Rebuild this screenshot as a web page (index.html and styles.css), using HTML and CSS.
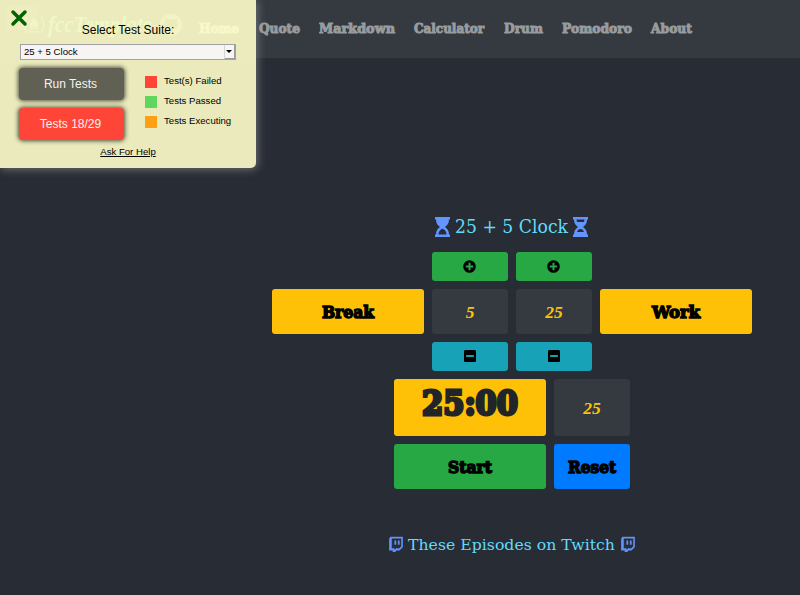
FILE: index.html
```html
<!DOCTYPE html>
<html lang="en">
<head>
<meta charset="utf-8">
<title>25 + 5 Clock</title>
<link rel="stylesheet" href="styles.css">
</head>
<body>
<svg class="defs" width="0" height="0">
  <symbol id="plus" viewBox="0 0 512 512"><path d="M256 8a248 248 0 1 0 0 496 248 248 0 0 0 0-496zm144 276c0 7-5 12-12 12h-92v92c0 7-5 12-12 12h-56c-7 0-12-5-12-12v-92h-92c-7 0-12-5-12-12v-56c0-7 5-12 12-12h92v-92c0-7 5-12 12-12h56c7 0 12 5 12 12v92h92c7 0 12 5 12 12z"/></symbol>
  <symbol id="minus" viewBox="0 0 448 512"><path d="M400 32H48C21.500 32 0 53.500 0 80v352c0 26.500 21.500 48 48 48h352c26.500 0 48-21.500 48-48V80c0-26.500-21.500-48-48-48zM92 296c-7 0-12-5-12-12v-56c0-7 5-12 12-12h264c7 0 12 5 12 12v56c0 7-5 12-12 12H92z"/></symbol>
  <symbol id="twitch" viewBox="0 0 448 512"><path d="M40 32L8 114v340h116v58h65l57-58h89l105-103V32H40zm358 299l-66 66H229l-57 57v-57H84V73h314v258zM332 152v120h-41V152h41zm-109 0v120h-41V152h41z"/></symbol>
</svg>

<nav class="navbar">
  <a class="brand">
    <svg width="24" height="22" viewBox="0 0 24 22"><path d="M5 3Q-1 11 5 19M19 3q6 8 0 16" fill="none" stroke="currentColor" stroke-width="1.500"/><path d="M11 4c4 3 5 5 5 7 0 3-2 4-3 4 1-2 0-3-1-4 0 2-2 2-1 4-2-1-3-2-3-4 0-3 3-3 3-7zM7 17h10v1.500H7z" fill="currentColor"/></svg>
    <svg width="108" height="36"><text class="script" x="2" y="25" textLength="104" lengthAdjust="spacingAndGlyphs">fccTemplate</text></svg>
    <svg class="github" width="22" height="22" viewBox="0 0 22 22"><path fill="currentColor" fill-rule="evenodd" d="M11 0a11 11 0 1 0 0 22 11 11 0 0 0 0-22zM5 4l3 1.500h6L17 4v4c2 4 0 7-4 7.500l1 5H8v-2l-3-2h3v-1C4 15 3 11 5 8z"/></svg>
  </a>
  <a class="link active"><svg width="41" height="20"><text y="16" textLength="40" lengthAdjust="spacingAndGlyphs">Home</text></svg></a>
  <a class="link"><svg width="41" height="20"><text y="16" textLength="41" lengthAdjust="spacingAndGlyphs">Quote</text></svg></a>
  <a class="link"><svg width="76" height="20"><text y="16" textLength="76" lengthAdjust="spacingAndGlyphs">Markdown</text></svg></a>
  <a class="link"><svg width="71" height="20"><text y="16" textLength="70" lengthAdjust="spacingAndGlyphs">Calculator</text></svg></a>
  <a class="link"><svg width="39" height="20"><text y="16" textLength="39" lengthAdjust="spacingAndGlyphs">Drum</text></svg></a>
  <a class="link"><svg width="70" height="20"><text y="16" textLength="70" lengthAdjust="spacingAndGlyphs">Pomodoro</text></svg></a>
  <a class="link"><svg width="42" height="20"><text y="16" textLength="41" lengthAdjust="spacingAndGlyphs">About</text></svg></a>
</nav>

<main class="clock">
  <h1 class="title">
    <svg class="glass" width="15" height="20" viewBox="0 0 15 20"><path d="M0 0h15v2.500h-1c0 4-2 6-4 7.500 2 1.500 4 3.500 4 7.500h1V20H0v-2.500h1c0-4 2-6 4-7.500-2-1.500-4-3.500-4-7.500H0zM3.500 17.500h8c0-3-2-5.500-4-5.500s-4 2.500-4 5.500z" fill-rule="evenodd"/></svg>
    <svg width="113" height="24"><text y="18" textLength="113" lengthAdjust="spacingAndGlyphs">25 + 5 Clock</text></svg>
    <svg class="glass" width="15" height="20" viewBox="0 0 15 20"><path d="M0 0h15v2.500h-1c0 4-2 6-4 7.500 2 1.500 4 3.500 4 7.500h1V20H0v-2.500h1c0-4 2-6 4-7.500-2-1.500-4-3.500-4-7.500H0zM3.500 2.500l.5 2.500h7l.5-2.500zM4 15h7c-.5-2-2-3-3.500-3S4.500 13 4 15z" fill-rule="evenodd"/></svg>
  </h1>
  <div class="row small">
    <button class="btn green"><svg width="13" height="13"><use href="#plus"/></svg></button>
    <button class="btn green"><svg width="13" height="13"><use href="#plus"/></svg></button>
  </div>
  <div class="row medium">
    <button class="btn wide yellow"><svg width="52" height="24"><text class="slab" y="18" textLength="52" lengthAdjust="spacingAndGlyphs">Break</text></svg></button>
    <div class="btn dark">5</div>
    <div class="btn dark">25</div>
    <button class="btn wide yellow"><svg width="48" height="24"><text class="slab" y="18" textLength="48" lengthAdjust="spacingAndGlyphs">Work</text></svg></button>
  </div>
  <div class="row small">
    <button class="btn cyan"><svg width="12" height="14"><use href="#minus"/></svg></button>
    <button class="btn cyan"><svg width="12" height="14"><use href="#minus"/></svg></button>
  </div>
  <div class="row tall">
    <div class="btn wide yellow timer"><svg width="98" height="40"><text class="slab digits" x="1" y="32" textLength="96" lengthAdjust="spacingAndGlyphs">25:00</text></svg></div>
    <div class="btn dark">25</div>
  </div>
  <div class="row medium">
    <button class="btn wide green"><svg width="44" height="24"><text class="slab" y="18" textLength="44" lengthAdjust="spacingAndGlyphs">Start</text></svg></button>
    <button class="btn blue"><svg width="48" height="24"><text class="slab" y="18" textLength="48" lengthAdjust="spacingAndGlyphs">Reset</text></svg></button>
  </div>
  <p class="twitch">
    <svg class="logo" width="14" height="16"><use href="#twitch"/></svg>
    <svg width="208" height="24"><text y="17" textLength="207" lengthAdjust="spacingAndGlyphs">These Episodes on Twitch</text></svg>
    <svg class="logo" width="14" height="16"><use href="#twitch"/></svg>
  </p>
</main>

<aside class="panel">
  <div class="close"><svg width="16" height="16"><path d="M2 2l12 12M14 2L2 14"/></svg></div>
  <div class="label">Select Test Suite:</div>
  <div class="select"><span>25 + 5 Clock</span><i></i></div>
  <div class="columns">
    <div class="actions">
      <button class="run">Run Tests</button>
      <button class="run failed">Tests 18/29</button>
    </div>
    <ul class="legend">
      <li><i class="red"></i>Test(s) Failed</li>
      <li><i class="lime"></i>Tests Passed</li>
      <li><i class="orange"></i>Tests Executing</li>
    </ul>
  </div>
  <a class="help">Ask For Help</a>
</aside>
</body>
</html>
```

FILE: styles.css
```css
* { box-sizing: border-box; }
body {
  margin: 0;
  height: 595px;
  overflow: hidden;
  background: #282c34;
  font-family: "Liberation Sans", Arial, sans-serif;
}
.defs { position: absolute; }
svg { display: block; overflow: visible; flex: none; }
.navbar {
  display: flex;
  align-items: center;
  gap: 19px;
  height: 58px;
  padding-left: 22px;
  background: #343a40;
}
.brand { display: flex; align-items: center; width: 158px; height: 48px; margin-top: -8px; color: #6a9c84; }
.brand .github { margin-left: 6px; color: #85898c; }
.script { font: italic bold 24px "Liberation Serif", serif; fill: #5cc090; }
.link { margin-top: -4px; }
.link text { font: bold 13.500px "DejaVu Serif", serif; fill: #999c9f; stroke: #999c9f; stroke-width: 1px; }
.link.active text { fill: #b4b6b8; stroke: #b4b6b8; }

.clock { margin-left: 224px; width: 576px; padding-top: 157px; }
.title, .twitch {
  display: flex;
  justify-content: center;
  align-items: center;
  gap: 5px;
  margin: 0;
  height: 24px;
  fill: #61dafb;
}
.title { position: relative; left: -.5px; margin-bottom: 13px; }
.title text { font: 18px "DejaVu Serif", serif; }
.glass, .logo { fill: #6495ff; }
.glass { margin-top: -1px; }
.row { display: flex; justify-content: center; gap: 8px; margin-bottom: 8px; }
.small { height: 29px; }
.medium { height: 45px; }
.tall { height: 57px; }
.btn {
  display: flex;
  align-items: center;
  justify-content: center;
  width: 76px;
  height: 100%;
  padding: 0;
  border: 0;
  border-radius: 3px;
  color: #000;
}
.small .btn { padding: 0 1px 1px 0; }
.wide { width: 152px; }
.green { background: #28a745; }
.cyan { background: #17a2b8; }
.blue { background: #007bff; }
.yellow { background: #ffc107; }
.dark { padding-top: 2px; background: #343a40; color: #ffc107; font: italic bold 17.500px "Liberation Serif", serif; }
.slab { font: bold 16px "DejaVu Serif", serif; stroke: #000; stroke-width: 1.400px; }
.digits { font-size: 33px; fill: #212529; stroke: #212529; stroke-width: 3.200px; }
.timer { align-items: flex-start; padding-top: 4px; }
.twitch { margin-top: 44px; gap: 5px; }
.twitch text { font: 15.500px "DejaVu Serif", serif; }
.logo { margin-top: -2px; stroke: #6495ff; stroke-width: 14px; }

.panel {
  position: absolute;
  top: 0;
  left: 0;
  width: 256px;
  height: 168px;
  padding: 22px 20px 0;
  border-radius: 0 0 5px 0;
  background: rgba(255, 255, 204, .9);
  box-shadow: 1px 1px 10px rgba(155, 155, 155, .65);
  color: #000;
}
.close {
  position: absolute;
  top: 6px;
  left: 6px;
  width: 32px;
  height: 24px;
  padding: 4px 5px;
  background: rgba(255, 255, 204, .12);
}
.close path { stroke: #006400; stroke-width: 3.500px; stroke-linecap: round; }
.label { height: 22px; text-align: center; font-size: 12px; line-height: 17px; }
.select {
  display: flex;
  justify-content: space-between;
  width: 216px;
  height: 16px;
  border: 1px solid #a2a2a6;
  background: #f6f5f3;
  font-size: 9.600px;
  line-height: 14px;
}
.select span { padding-left: 3px; }
.select i {
  width: 10px;
  height: 14px;
  border: solid #999ba0;
  border-width: 0 1px 1px 0;
  box-shadow: -1px 0 #d4d4d4;
}
.select i::before {
  content: "";
  display: block;
  width: 6px;
  height: 3px;
  margin: 5px 0 0 1px;
  background: #000;
  clip-path: polygon(0 0, 100% 0, 50% 100%);
}
.columns { display: flex; gap: 21px; margin: 8px 0 0 -1px; }
.actions { display: flex; flex-direction: column; gap: 8px; }
.run {
  width: 105px;
  height: 32px;
  padding: 0 2px 0 0;
  border: 0;
  border-radius: 4px;
  background: #606055;
  box-shadow: 0 0 4px 1px rgba(40, 40, 30, .8);
  color: #f4f4ea;
  font: 12px "Liberation Sans", Arial, sans-serif;
}
.failed { background: #ff4538; }
.legend { margin: 3px 0 0; padding: 0; list-style: none; font-size: 9.600px; }
.legend li { display: flex; height: 20px; line-height: 20px; white-space: nowrap; }
.legend i { width: 12px; height: 12px; margin: 5px 7px 0 0; }
.red { background: #ff4538; }
.lime { background: #5fd65c; }
.orange { background: #ffa012; }
.help { display: block; margin-top: 6px; text-align: center; font-size: 9.600px; line-height: 12px; text-decoration: underline; }
```
